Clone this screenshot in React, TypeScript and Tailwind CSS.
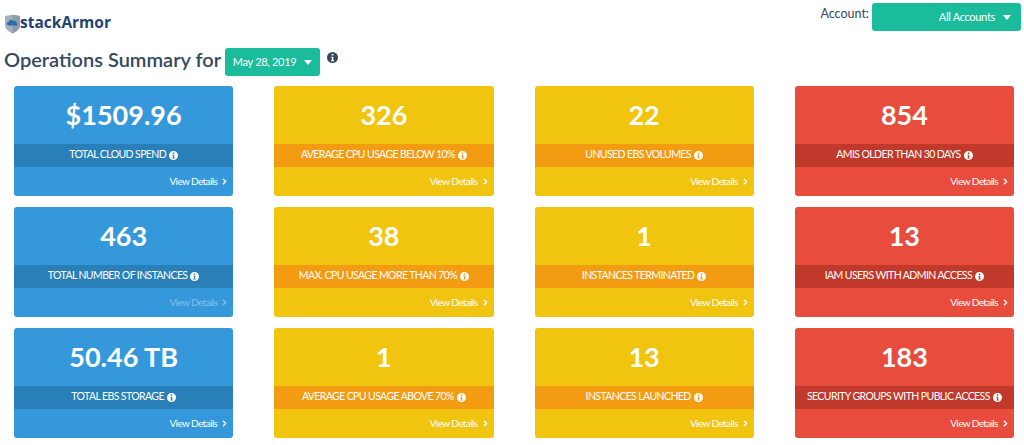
import { ChevronRight } from 'lucide-react';

type Stat = { value: string; label: string; muted?: boolean };

const columns: { tone: 'blue' | 'yellow' | 'red'; stats: Stat[] }[] = [
  {
    tone: 'blue',
    stats: [
      { value: '$1509.96', label: 'TOTAL CLOUD SPEND' },
      { value: '463', label: 'TOTAL NUMBER OF INSTANCES', muted: true },
      { value: '50.46 TB', label: 'TOTAL EBS STORAGE' },
    ],
  },
  {
    tone: 'yellow',
    stats: [
      { value: '326', label: 'AVERAGE CPU USAGE BELOW 10%' },
      { value: '38', label: 'MAX. CPU USAGE MORE THAN 70%' },
      { value: '1', label: 'AVERAGE CPU USAGE ABOVE 70%' },
    ],
  },
  {
    tone: 'yellow',
    stats: [
      { value: '22', label: 'UNUSED EBS VOLUMES' },
      { value: '1', label: 'INSTANCES TERMINATED' },
      { value: '13', label: 'INSTANCES LAUNCHED' },
    ],
  },
  {
    tone: 'red',
    stats: [
      { value: '854', label: 'AMIS OLDER THAN 30 DAYS' },
      { value: '13', label: 'IAM USERS WITH ADMIN ACCESS' },
      { value: '183', label: 'SECURITY GROUPS WITH PUBLIC ACCESS' },
    ],
  },
];

const tones = {
  blue: { card: 'bg-[#3498db]', band: 'bg-[#2980b9]' },
  yellow: { card: 'bg-[#f1c40f]', band: 'bg-[#f39c12]' },
  red: { card: 'bg-[#e74c3c]', band: 'bg-[#c0392b]' },
};

// filled circle with a knocked-out "i", as in the font-awesome info icon
const InfoDot = ({ className }: { className: string }) => (
  <svg viewBox="0 0 16 16" className={className} fill="currentColor">
    <path
      fillRule="evenodd"
      d="M8 0a8 8 0 1 0 0 16A8 8 0 0 0 8 0ZM6.700 2.800h2.600v2.400H6.700V2.800Zm-.6 4h3.200v5h1v1.600H5.900v-1.600h1V8.400h-.8V6.800Z"
    />
  </svg>
);

const Caret = () => (
  <span className="ml-[8px] h-0 w-0 border-x-[4px] border-t-[5px] border-x-transparent border-t-white" />
);

const Logo = () => (
  <div className="flex items-start">
    <svg viewBox="0 0 16 20" className="h-[20px] w-[15px] shrink-0">
      <path d="M0 1.500 8 0l8 1.500V11c0 4-3.500 7-8 9-4.500-2-8-5-8-9V1.500Z" fill="#a3b1bd" />
      <path d="M8 0l8 1.500V11c0 4-3.500 7-8 9V0Z" fill="#8b9cab" />
      <path
        d="M3.500 11.500a2 2 0 0 1 .3-3.900 2.800 2.800 0 0 1 5.300-.6 2.300 2.300 0 0 1 3.300 2.200 1.200 1.200 0 0 1 .1 2.300H3.500Z"
        fill="#2b6cb0"
      />
    </svg>
    <span className="text-[15.500px] font-bold leading-[16px] text-[#1f4470] font-['Open_Sans',sans-serif]">
      stackArmor
    </span>
  </div>
);

const StatCard = ({ stat, tone }: { stat: Stat; tone: keyof typeof tones }) => (
  <div className={`flex h-[110px] flex-col rounded-[3px] text-white ${tones[tone].card}`}>
    <div className="flex h-[58px] items-center justify-center pb-[2px] text-[27px] font-bold leading-none">
      {stat.value}
    </div>
    <div
      className={`flex h-[23px] items-center justify-center pb-[1px] text-[10.500px] tracking-[-0.6px] ${tones[tone].band}`}
    >
      {stat.label}
      <InfoDot className="ml-[3px] h-[9px] w-[9px]" />
    </div>
    <div
      className={`flex flex-1 items-center justify-end pr-[4px] text-[10px] tracking-[-0.6px] ${
        stat.muted ? 'text-white/40' : ''
      }`}
    >
      View Details
      <ChevronRight className="ml-[3px] h-[9px] w-[9px]" strokeWidth={4} />
    </div>
  </div>
);

export default function App() {
  return (
    <div className="h-[445px] w-[1024px] overflow-hidden bg-white font-['Lato','Open_Sans',sans-serif] text-[#34495e]">
      <header className="flex h-[48px] items-start justify-between pl-[5px] pr-[3px]">
        <div className="pt-[14px]">
          <Logo />
        </div>
        <div className="flex items-start pt-[3px]">
          <span className="mr-[3px] mt-[3px] text-[12.500px] leading-[16px]">Account:</span>
          <button className="flex h-[28px] w-[149px] items-center justify-end rounded-[3px] bg-[#1abc9c] pr-[10px] text-[11px] tracking-[-0.3px] text-white">
            All Accounts
            <Caret />
          </button>
        </div>
      </header>

      <div className="flex h-[38px] items-start pl-[4px]">
        <h1 className="text-[20px] font-semibold leading-[22px]">Operations Summary for</h1>
        <button className="ml-[4px] flex h-[28px] w-[95px] items-center justify-center rounded-[3px] bg-[#1abc9c] text-[11px] tracking-[-0.3px] text-white">
          May 28, 2019
          <Caret />
        </button>
        <InfoDot className="ml-[7px] mt-[4px] h-[11px] w-[11px] text-[#34495e]" />
      </div>

      <main className="grid grid-cols-4 gap-x-[41px] pl-[14px] pr-[10px]">
        {columns.map((col, i) => (
          <div key={i} className="flex flex-col gap-[11px]">
            {col.stats.map((stat) => (
              <StatCard key={stat.label} stat={stat} tone={col.tone} />
            ))}
          </div>
        ))}
      </main>
    </div>
  );
}
